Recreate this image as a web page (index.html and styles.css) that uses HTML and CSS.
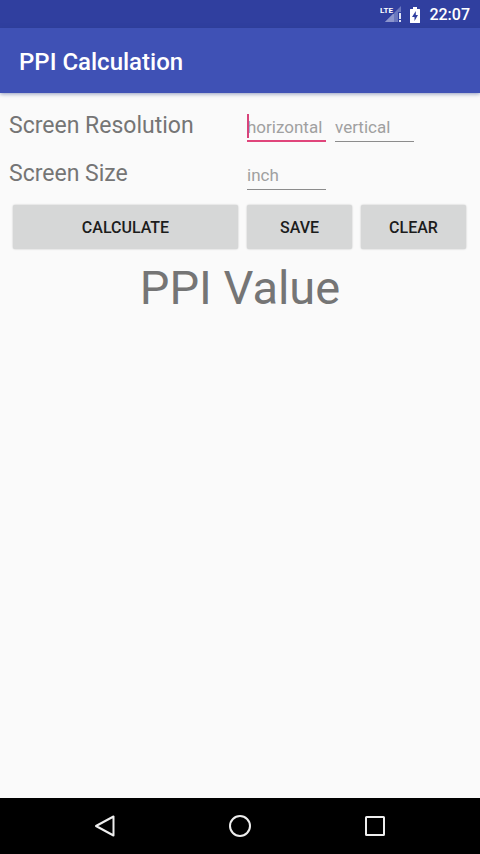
FILE: index.html
```html
<!DOCTYPE html>
<html lang="en">
<head>
<meta charset="utf-8">
<meta name="viewport" content="width=device-width, initial-scale=1">
<title>PPI Calculation</title>
<link rel="stylesheet" href="styles.css">
</head>
<body>
<div class="status-bar">
  <svg class="signal" viewBox="0 0 24 20" aria-hidden="true">
    <path class="signal-dim" d="M21 1V17H5z"/>
    <path class="signal-on" d="M14 8V17H5z"/>
    <path class="signal-cut" d="M18 7h6v12h-6z"/>
    <path class="signal-mark" d="M19 8h2v6h-2zM19 15h2v2h-2z"/>
    <text class="signal-text" x="0" y="8">LTE</text>
  </svg>
  <svg class="battery" viewBox="0 0 12 18" aria-hidden="true">
    <path fill="#fff" d="M4 1h4v2h2.500q.5 0 .5.500V16.500q0 .5-.5.500h-9q-.5 0-.5-.500V3.500q0-.5.5-.500H4z"/>
    <path fill="#303f9f" d="M6.800 5L3 11h2.500v4L9 9H6.800z"/>
  </svg>
  <time class="clock">22:07</time>
</div>
<header class="app-bar"><h1 class="title">PPI Calculation</h1></header>
<main class="content">
  <form>
    <div class="row">
      <label class="label" for="horizontal">Screen Resolution</label>
      <div class="field">
        <input class="input input-active" id="horizontal" type="text" placeholder="horizontal">
        <span class="caret"></span>
      </div>
      <div class="field">
        <input class="input" id="vertical" type="text" placeholder="vertical" aria-label="Vertical resolution">
      </div>
    </div>
    <div class="row">
      <label class="label" for="inch">Screen Size</label>
      <div class="field">
        <input class="input" id="inch" type="text" placeholder="inch">
      </div>
    </div>
    <div class="actions">
      <button class="button" type="button">CALCULATE</button>
      <button class="button" type="button">SAVE</button>
      <button class="button" type="reset">CLEAR</button>
    </div>
  </form>
  <output class="result">PPI Value</output>
</main>
<nav class="nav-bar">
  <button class="nav-button" type="button" aria-label="Back">
    <svg class="nav-icon" viewBox="0 0 24 24"><path d="M20.500 2.500v19L3 12z"/></svg>
  </button>
  <button class="nav-button" type="button" aria-label="Home">
    <svg class="nav-icon" viewBox="0 0 24 24"><circle cx="12" cy="12" r="10"/></svg>
  </button>
  <button class="nav-button" type="button" aria-label="Recents">
    <svg class="nav-icon" viewBox="0 0 24 24"><rect x="3" y="3" width="18" height="18" rx="0.500"/></svg>
  </button>
</nav>
</body>
</html>
```
FILE: styles.css
```css
* {
  box-sizing: border-box;
}

body {
  margin: 0;
  min-height: 100vh;
  display: flex;
  flex-direction: column;
  background: #fafafa;
  color: #757575;
  font-family: Roboto, sans-serif;
}

.status-bar {
  height: 28px;
  padding: 2px 10px 0;
  display: flex;
  align-items: center;
  justify-content: flex-end;
  background: #303f9f;
  color: #fff;
}

.signal {
  width: 24px;
  height: 20px;
  margin-right: 5px;
}

.signal-dim { fill: #6b77bd; }
.signal-on { fill: #8c95cd; }
.signal-cut { fill: #303f9f; }
.signal-mark { fill: #dfe3f6; }

.signal-text {
  fill: #fff;
  stroke: #303f9f;
  stroke-width: 2;
  paint-order: stroke;
  font-family: "Liberation Sans Narrow", Roboto, sans-serif;
  font-size: 8px;
  font-weight: 700;
}

.battery {
  width: 12px;
  height: 18px;
  margin-right: 8px;
}

.clock {
  font-size: 16px;
  font-weight: 500;
  line-height: 26px;
}

.app-bar {
  height: 65px;
  padding: 2px 19px 0;
  display: flex;
  align-items: center;
  background: #3f51b5;
  color: #fff;
  box-shadow: 0 1px 4px rgba(40, 60, 130, 0.5);
}

.title {
  margin: 0;
  font-size: 24px;
  font-weight: 500;
  line-height: 28px;
}

.content {
  flex: 1;
  padding-top: 9px;
}

.row {
  height: 48px;
  padding: 0 66px 0 9px;
  display: grid;
  grid-template-columns: 1fr 79px 79px;
  column-gap: 9px;
  align-items: center;
}

.label {
  font-size: 23px;
  line-height: 28px;
}

.field {
  position: relative;
}

.input {
  display: block;
  width: 100%;
  height: 32px;
  padding: 3px 0 0;
  border: 0;
  border-bottom: 1px solid #8c8c8c;
  border-radius: 0;
  background: transparent;
  color: #212121;
  font: 400 17px/24px Roboto, sans-serif;
  outline: 0;
}

.input-active {
  border-bottom: 2px solid #e0457b;
}

.input::placeholder {
  color: #a0a0a0;
  opacity: 1;
}

.caret {
  position: absolute;
  left: 0;
  top: 4px;
  width: 2px;
  height: 24px;
  background: #d8437a;
}

.actions {
  padding: 7px 14px 8px 13px;
  display: grid;
  grid-template-columns: 15fr 7fr 7fr;
  column-gap: 9px;
}

.button {
  height: 44px;
  padding: 2px 0 0;
  border: 0;
  border-radius: 2px;
  background: #d6d7d7;
  color: #1c1c1c;
  font: 500 16px/20px Roboto, sans-serif;
  box-shadow: 0 0 2px rgba(0, 0, 0, 0.25);
}

.result {
  display: block;
  text-align: center;
  font-size: 47px;
  line-height: 62px;
}

.nav-bar {
  height: 56px;
  padding: 0 38px;
  display: grid;
  grid-template-columns: repeat(3, 1fr);
  background: #000;
}

.nav-button {
  padding: 0;
  border: 0;
  background: transparent;
  display: flex;
  align-items: center;
  justify-content: center;
}

.nav-icon {
  width: 24px;
  height: 24px;
  fill: none;
  stroke: #eee;
  stroke-width: 2;
  stroke-linejoin: round;
}
```
